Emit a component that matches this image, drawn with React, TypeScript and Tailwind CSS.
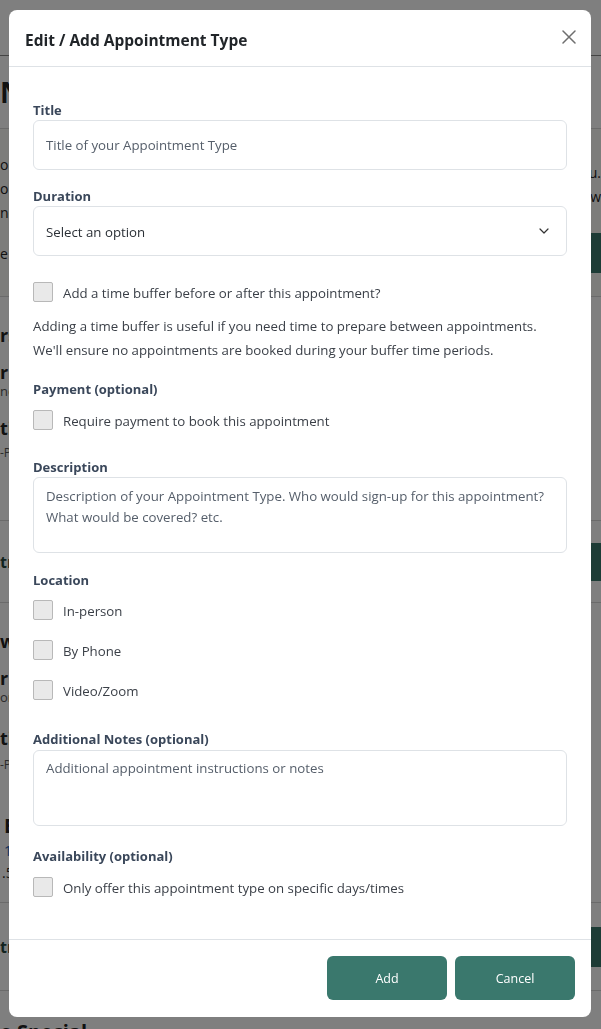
import { ChevronDown } from 'lucide-react';

function Checkbox({ label }: { label: string }) {
  return (
    <label className="flex items-center gap-[10px] h-5">
      <span className="w-5 h-5 shrink-0 rounded-[2px] border border-[#b8b8b8] bg-[#e9e9e9]" />
      <span className="text-[13.25px] leading-5 text-[#3a3f47] pt-px">{label}</span>
    </label>
  );
}

function FieldLabel({ children, className = '' }: { children: string; className?: string }) {
  return <div className={`text-[13px] leading-5 font-bold text-[#3a475a] ${className}`}>{children}</div>;
}

function BackgroundPage() {
  return (
    <div className="min-h-screen bg-white text-[#222] overflow-hidden">
      <div className="h-[56px] border-b border-[#888]" />
      <div className="h-[73px] flex items-center border-b border-[#d6d6d6]">
        <span className="text-[28px] font-bold">Nouveau</span>
      </div>
      <div className="h-[168px] bg-[#fbfaf6] border-b border-[#d6d6d6]">
        <div className="pt-[24px] text-[14px] leading-[24px] flex justify-between">
          <div>
            <div>oint types let clients book.</div>
            <div>o appointments</div>
            <div>ne by one.</div>
          </div>
          <div className="text-right">
            <div className="mt-[8px]">you.</div>
            <div>w</div>
          </div>
        </div>
        <div className="flex justify-between items-center mt-[8px]">
          <span className="text-[14px]">e 'Add'</span>
          <span className="w-[60px] h-[40px] rounded-l-md bg-[#3a786d] text-white text-[13px] leading-[40px] px-[3px]">Add</span>
        </div>
      </div>
      <div className="h-[224px] border-b border-[#d6d6d6] pt-[26px]">
        <div className="text-[18px] font-bold leading-[24px]">rs</div>
        <div className="mt-[14px] text-[18px] font-bold leading-[22px]">ri</div>
        <div className="text-[13px] leading-[16px] text-[#555]">nc</div>
        <div className="mt-[18px] text-[18px] font-bold leading-[22px]">ti</div>
        <div className="mt-[6px] text-[12px] leading-[16px] text-[#555]">-P</div>
      </div>
      <div className="h-[82px] border-b border-[#d6d6d6] flex items-center justify-between">
        <span className="text-[16px] font-bold text-[#24473f]">tn</span>
        <span className="w-[60px] h-[38px] rounded-l-lg bg-[#3a786d]" />
      </div>
      <div className="h-[300px] border-b border-[#d6d6d6] pt-[26px]">
        <div className="text-[18px] font-bold leading-[24px]">w</div>
        <div className="mt-[14px] text-[18px] font-bold leading-[22px]">ri</div>
        <div className="text-[13px] leading-[16px] text-[#555]">or</div>
        <div className="mt-[22px] text-[18px] font-bold leading-[22px]">ti</div>
        <div className="mt-[8px] text-[12px] leading-[16px] text-[#555]">-P</div>
        <div className="mt-[40px] text-[20px] font-bold leading-[26px] pl-[4px]">E</div>
        <div className="text-[14px] leading-[24px] text-[#1a5fb4] pl-[4px]">1</div>
        <div className="text-[14px] leading-[20px] pl-[2px]">.5</div>
      </div>
      <div className="h-[88px] border-b border-[#d6d6d6] flex items-center justify-between">
        <span className="text-[16px] font-bold text-[#24473f]">tn</span>
        <span className="w-[60px] h-[40px] rounded-l-lg bg-[#3a786d]" />
      </div>
      <div className="pt-[26px] flex items-baseline gap-1">
        <span className="text-[20px] font-bold">e Special</span>
        <span className="text-[12px] text-[#666]">(duration: 15 minutes)</span>
      </div>
    </div>
  );
}

export default function App() {
  return (
    <div className="relative" style={{ fontFamily: '"Open Sans", "Noto Sans", sans-serif' }}>
      <BackgroundPage />
      <div className="fixed inset-0 bg-black/50">
        <div className="w-[582px] ml-[9px] mt-[10px] rounded-lg bg-white overflow-hidden">
          <div className="h-[57px] px-4 pr-[15px] flex items-center justify-between border-b border-[#dee2e6]">
            <h2 className="text-[15.5px] font-bold text-[#212529] pt-[6px]">Edit / Add Appointment Type</h2>
            <svg width="14" height="14" viewBox="0 0 14 14" className="mt-[-2px]">
              <path d="M1 1L13 13M13 1L1 13" stroke="#6f6f6f" strokeWidth="1.5" strokeLinecap="round" />
            </svg>
          </div>

          <div className="px-6 pt-[33px] pb-[42px]">
            <FieldLabel>Title</FieldLabel>
            <div className="h-[50px] rounded-md border border-[#dee2e6] px-3 pt-[2px] flex items-center text-[13.25px] text-[#555e6a]">
              Title of your Appointment Type
            </div>

            <FieldLabel className="mt-4">Duration</FieldLabel>
            <div className="h-[50px] rounded-md border border-[#dee2e6] pl-3 pr-[14px] flex items-center justify-between text-[13.25px] text-[#2b3036]">
              <span className="pt-[3px]">Select an option</span>
              <ChevronDown size={16} strokeWidth={1.8} color="#333" />
            </div>

            <div className="mt-[26px]">
              <Checkbox label="Add a time buffer before or after this appointment?" />
            </div>
            <p className="mt-3 text-[13.25px] leading-[24px] text-[#3a3f47]">
              Adding a time buffer is useful if you need time to prepare between appointments.
              <br />
              We'll ensure no appointments are booked during your buffer time periods.
            </p>

            <FieldLabel className="mt-[17px]">Payment (optional)</FieldLabel>
            <div className="mt-[11px]">
              <Checkbox label="Require payment to book this appointment" />
            </div>

            <FieldLabel className="mt-[27px]">Description</FieldLabel>
            <div className="h-[76px] rounded-md border border-[#dee2e6] px-3 pt-[8px] text-[13.25px] leading-[21px] text-[#555e6a]">
              Description of your Appointment Type. Who would sign-up for this appointment?
              <br />
              What would be covered? etc.
            </div>

            <FieldLabel className="mt-[17px]">Location</FieldLabel>
            <div className="mt-[10px] flex flex-col gap-5">
              <Checkbox label="In-person" />
              <Checkbox label="By Phone" />
              <Checkbox label="Video/Zoom" />
            </div>

            <FieldLabel className="mt-[29px]">Additional Notes (optional)</FieldLabel>
            <div className="mt-px h-[76px] rounded-md border border-[#dee2e6] px-3 pt-[7px] text-[13.25px] leading-[21px] text-[#555e6a]">
              Additional appointment instructions or notes
            </div>

            <FieldLabel className="mt-5">Availability (optional)</FieldLabel>
            <div className="mt-[11px]">
              <Checkbox label="Only offer this appointment type on specific days/times" />
            </div>
          </div>

          <div className="border-t border-[#dee2e6] pt-4 pb-[17px] pr-4 flex justify-end gap-2">
            <button className="w-[120px] h-[44px] rounded-md bg-[#3a786d] text-white text-[12.5px] pt-[2px]">Add</button>
            <button className="w-[120px] h-[44px] rounded-md bg-[#3a786d] text-white text-[12.5px] pt-[2px]">Cancel</button>
          </div>
        </div>
      </div>
    </div>
  );
}
